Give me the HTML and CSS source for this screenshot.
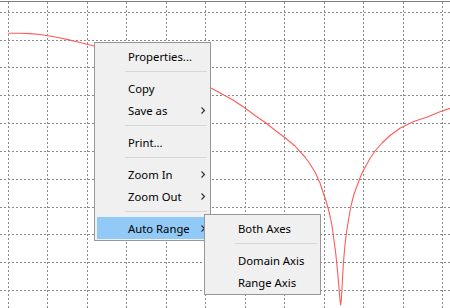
FILE: index.html
```html
<!DOCTYPE html>
<html lang="en">
<head>
    <meta charset="UTF-8">
    <meta name="viewport" content="width=device-width, initial-scale=1.0">
    <title>Chart Popup Menu</title>
    <link rel="stylesheet" href="styles.css">
</head>
<body>
    <div class="chart">
        <svg class="plot" width="450" height="308" viewBox="0 0 450 308">
            <!-- plot outline (top edge only is visible) -->
            <line class="outline" x1="0" y1="1.5" x2="450" y2="1.5"/>
            <!-- domain gridlines -->
            <g class="grid">
                <line x1="8.5" y1="2" x2="8.5" y2="308"/>
                <line x1="47.5" y1="2" x2="47.5" y2="308"/>
                <line x1="87.5" y1="2" x2="87.5" y2="308"/>
                <line x1="126.5" y1="2" x2="126.5" y2="308"/>
                <line x1="166.5" y1="2" x2="166.5" y2="308"/>
                <line x1="205.5" y1="2" x2="205.5" y2="308"/>
                <line x1="245.5" y1="2" x2="245.5" y2="308"/>
                <line x1="284.5" y1="2" x2="284.5" y2="308"/>
                <line x1="324.5" y1="2" x2="324.5" y2="308"/>
                <line x1="363.5" y1="2" x2="363.5" y2="308"/>
                <line x1="403.5" y1="2" x2="403.5" y2="308"/>
                <line x1="442.5" y1="2" x2="442.5" y2="308"/>
            </g>
            <!-- range gridlines -->
            <g class="grid">
                <line x1="0" y1="12.5" x2="450" y2="12.5"/>
                <line x1="0" y1="40.5" x2="450" y2="40.5"/>
                <line x1="0" y1="67.5" x2="450" y2="67.5"/>
                <line x1="0" y1="95.5" x2="450" y2="95.5"/>
                <line x1="0" y1="123.5" x2="450" y2="123.5"/>
                <line x1="0" y1="151.5" x2="450" y2="151.5"/>
                <line x1="0" y1="179.5" x2="450" y2="179.5"/>
                <line x1="0" y1="207.5" x2="450" y2="207.5"/>
                <line x1="0" y1="234.5" x2="450" y2="234.5"/>
                <line x1="0" y1="262.5" x2="450" y2="262.5"/>
                <line x1="0" y1="290.5" x2="450" y2="290.5"/>
            </g>
            <!-- series: notch response -->
            <polyline class="series" points="8.3,33.3 20,33.3 30,33.6 40,34.5 48,35.7 58,37.5 68,39.6 78,42 88,44.5 94,46 120,54 150,63 180,74 211,88 222,94 233,100 245,108 255,115.5 266,123 276,131 286,138.5 295,146 300,151.7 305,157 310,164 315,172 320,183 323.3,193 326,201 328.3,209 330.5,218 332,226 333.3,235 334.5,244 335.7,253 336.7,263 337.7,273 338.6,283 339.4,293 340.2,302 340.7,305 341.3,300 342,288 342.7,275 343.5,262 344.5,250 345.5,240 346.7,231 348.5,220 350,211 351.7,203 354,194 357,186 360,178 363,171 366.7,164.5 370,158.5 375,151 382,143 390,135.5 400,128.3 413,121.7 428,116.7 440,111.7 450,108.3"/>
        </svg>
    </div>

    <div class="menu mainMenu">
        <div class="item">Properties...</div>
        <div class="separator"></div>
        <div class="item">Copy</div>
        <div class="item">Save as <svg class="arrow" width="5" height="7" viewBox="0 0 5 7"><path d="M0.5 0.5 L3.5 3.5 L0.5 6.5"/></svg></div>
        <div class="separator"></div>
        <div class="item">Print...</div>
        <div class="separator"></div>
        <div class="item">Zoom In <svg class="arrow" width="5" height="7" viewBox="0 0 5 7"><path d="M0.5 0.5 L3.5 3.5 L0.5 6.5"/></svg></div>
        <div class="item">Zoom Out <svg class="arrow" width="5" height="7" viewBox="0 0 5 7"><path d="M0.5 0.5 L3.5 3.5 L0.5 6.5"/></svg></div>
        <div class="separator"></div>
        <div class="item selected">Auto Range <svg class="arrow" width="5" height="7" viewBox="0 0 5 7"><path d="M0.5 0.5 L3.5 3.5 L0.5 6.5"/></svg></div>
    </div>

    <div class="menu subMenu">
        <div class="item">Both Axes</div>
        <div class="separator"></div>
        <div class="item">Domain Axis</div>
        <div class="item">Range Axis</div>
    </div>
</body>
</html>
```

FILE: styles.css
```css
body {
    margin: 0;
    width: 450px;
    height: 308px;
    overflow: hidden;
    background: white;
    font-family: "Noto Sans", "Open Sans", sans-serif;
    font-size: 11.3px;
    color: #000;
}
.chart {
    width: 450px;
    height: 308px;
}
.plot {
    display: block;
}
.outline {
    stroke: #808080;
    stroke-width: 1;
}
.grid line {
    stroke: #8a8a8a;
    stroke-width: 1;
    stroke-dasharray: 2 2;
}
.series {
    fill: none;
    stroke: #ff5a5a;
    stroke-width: 1.1;
    stroke-linejoin: round;
}
.menu {
    position: absolute;
    box-sizing: border-box;
    width: 117px;
    padding: 2px 2px 1px 2px;
    background: #f0f0f0;
    border: 1px solid #979797;
}
.mainMenu {
    left: 94px;
    top: 42px;
}
.subMenu {
    left: 204px;
    top: 214px;
}
.item {
    display: flex;
    align-items: center;
    justify-content: space-between;
    height: 22px;
    padding: 0 2px 0 31px;
    white-space: nowrap;
}
.item.selected {
    background: #91c9f7;
}
.arrow path {
    fill: none;
    stroke: #333;
    stroke-width: 1.2;
}
.separator {
    height: 10px;
    margin: 0 1px 0 28px;
    position: relative;
}
.separator::after {
    content: "";
    position: absolute;
    left: 0;
    right: 0;
    top: 4px;
    height: 1px;
    background: #d7d7d7;
}
```
